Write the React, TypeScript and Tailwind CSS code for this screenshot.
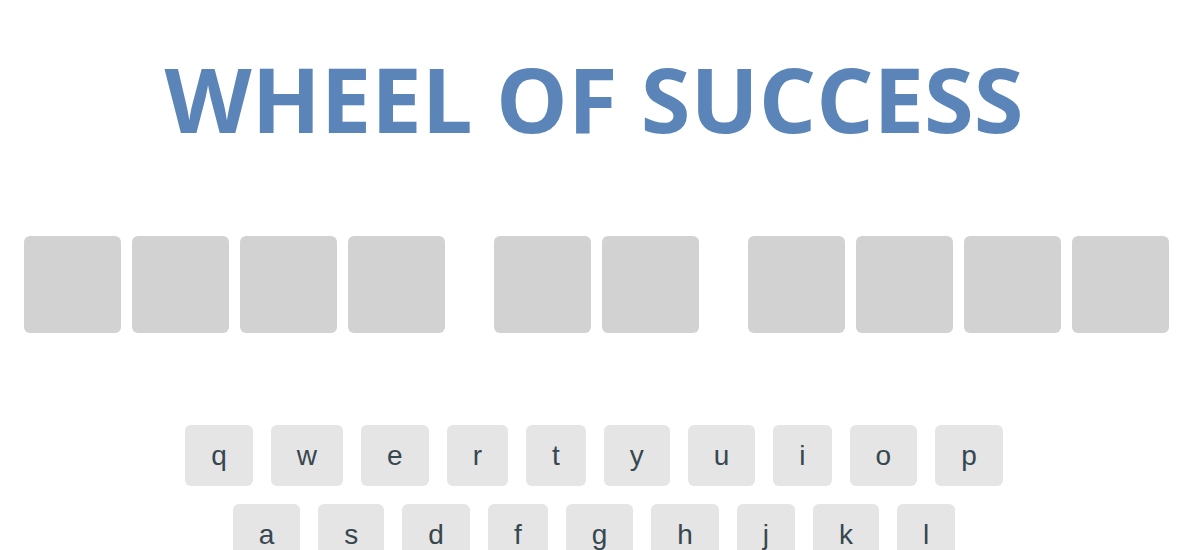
const phrase = ["____", "__", "____"];
const rows = ["qwertyuiop", "asdfghjkl", "zxcvbnm"];

function Letter() {
  return <li className="h-[97px] w-[97px] rounded-[6px] bg-[#d2d2d2]" />;
}

function Key({ ch }: { ch: string }) {
  return (
    <button
      type="button"
      className="rounded-[6px] bg-[#e5e5e5] px-[26px] py-[14px] text-[28px] leading-[33px] text-[#37474f] font-['Liberation_Sans',Arial,sans-serif]"
    >
      {ch}
    </button>
  );
}

export default function App() {
  return (
    <div className="min-h-[550px] w-full overflow-hidden bg-white">
      <main className="flex w-[1188px] flex-col items-center">
        <h1 className="mt-[37px] h-[123px] text-[90.2px] leading-[123px] font-bold text-[#5b85b8] font-['Open_Sans',sans-serif]">
          WHEEL OF SUCCESS
        </h1>
        <ul className="mt-[76px] ml-[4px] flex gap-[11px]">
          {phrase.map((word, wi) => (
            <li key={wi} className="contents">
              {wi > 0 && <span className="w-[27px]" />}
              {word.split("").map((_, i) => (
                <Letter key={i} />
              ))}
            </li>
          ))}
        </ul>
        <div className="mt-[92px] flex flex-col items-center gap-[18px]">
          {rows.map((row) => (
            <div key={row} className="flex gap-[18px]">
              {row.split("").map((ch) => (
                <Key key={ch} ch={ch} />
              ))}
            </div>
          ))}
        </div>
      </main>
    </div>
  );
}
